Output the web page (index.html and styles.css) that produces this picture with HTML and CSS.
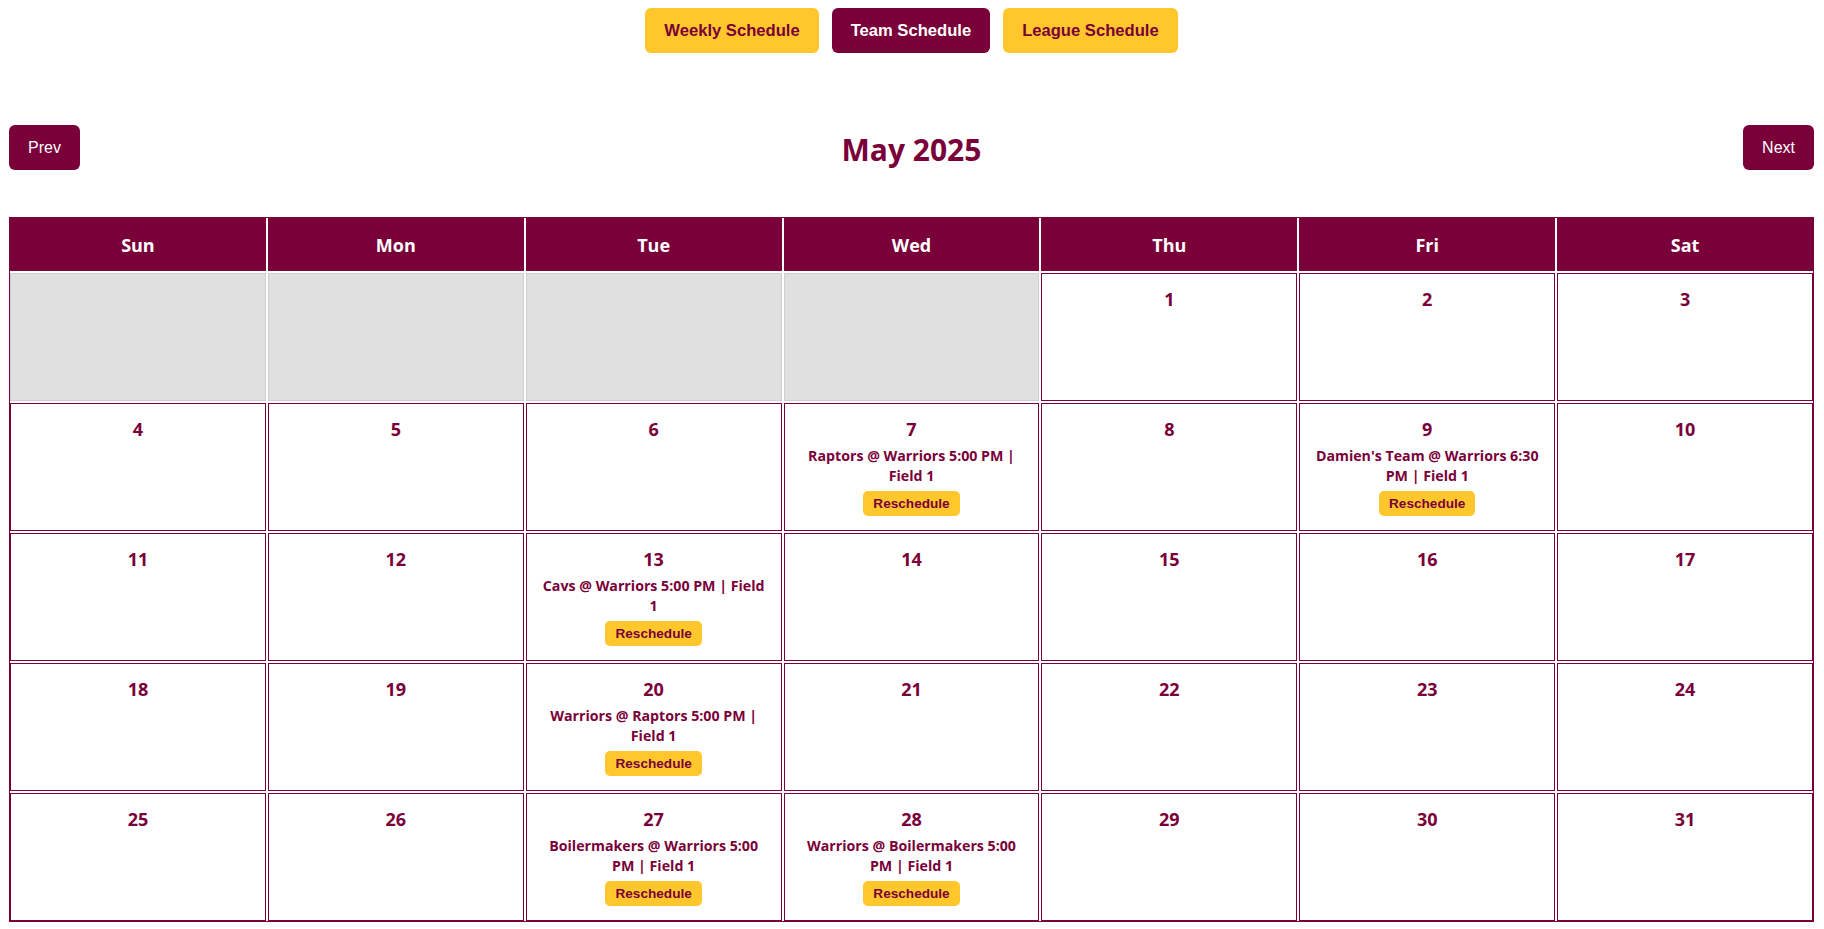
FILE: index.html
```html
<!DOCTYPE html>
<html lang="en">
<head>
<meta charset="utf-8">
<title>Team Schedule</title>
<link rel="stylesheet" href="styles.css">
</head>
<body>
<nav class="tabs">
  <button class="tab">Weekly Schedule</button>
  <button class="tab active">Team Schedule</button>
  <button class="tab">League Schedule</button>
</nav>

<div class="month-bar">
  <button class="nav-btn">Prev</button>
  <h2 class="month-title">May 2025</h2>
  <button class="nav-btn">Next</button>
</div>

<div class="calendar">
  <div class="dow">Sun</div>
  <div class="dow">Mon</div>
  <div class="dow">Tue</div>
  <div class="dow">Wed</div>
  <div class="dow">Thu</div>
  <div class="dow">Fri</div>
  <div class="dow">Sat</div>

  <div class="day empty"></div>
  <div class="day empty"></div>
  <div class="day empty"></div>
  <div class="day empty"></div>
  <div class="day"><div class="num">1</div></div>
  <div class="day"><div class="num">2</div></div>
  <div class="day"><div class="num">3</div></div>

  <div class="day"><div class="num">4</div></div>
  <div class="day"><div class="num">5</div></div>
  <div class="day"><div class="num">6</div></div>
  <div class="day"><div class="num">7</div><div class="event">Raptors @ Warriors 5:00 PM | Field 1</div><button class="resched">Reschedule</button></div>
  <div class="day"><div class="num">8</div></div>
  <div class="day"><div class="num">9</div><div class="event">Damien's Team @ Warriors 6:30 PM | Field 1</div><button class="resched">Reschedule</button></div>
  <div class="day"><div class="num">10</div></div>

  <div class="day"><div class="num">11</div></div>
  <div class="day"><div class="num">12</div></div>
  <div class="day"><div class="num">13</div><div class="event">Cavs @ Warriors 5:00 PM | Field 1</div><button class="resched">Reschedule</button></div>
  <div class="day"><div class="num">14</div></div>
  <div class="day"><div class="num">15</div></div>
  <div class="day"><div class="num">16</div></div>
  <div class="day"><div class="num">17</div></div>

  <div class="day"><div class="num">18</div></div>
  <div class="day"><div class="num">19</div></div>
  <div class="day"><div class="num">20</div><div class="event">Warriors @ Raptors 5:00 PM | Field 1</div><button class="resched">Reschedule</button></div>
  <div class="day"><div class="num">21</div></div>
  <div class="day"><div class="num">22</div></div>
  <div class="day"><div class="num">23</div></div>
  <div class="day"><div class="num">24</div></div>

  <div class="day"><div class="num">25</div></div>
  <div class="day"><div class="num">26</div></div>
  <div class="day"><div class="num">27</div><div class="event">Boilermakers @ Warriors 5:00 PM | Field 1</div><button class="resched">Reschedule</button></div>
  <div class="day"><div class="num">28</div><div class="event">Warriors @ Boilermakers 5:00 PM | Field 1</div><button class="resched">Reschedule</button></div>
  <div class="day"><div class="num">29</div></div>
  <div class="day"><div class="num">30</div></div>
  <div class="day"><div class="num">31</div></div>
</div>
</body>
</html>
```

FILE: styles.css
```css
* { box-sizing: border-box; }

body {
  margin: 0;
  padding: 8px 10px 0 9px;
  background: #ffffff;
  font-family: "Open Sans", "Noto Sans", sans-serif;
  color: #7a0039;
}

button {
  font-family: "Liberation Sans", Arial, sans-serif;
  border: none;
  cursor: pointer;
}

.tabs {
  display: flex;
  justify-content: center;
  gap: 13px;
}

.tab {
  height: 45px;
  padding: 0 19px;
  border-radius: 6px;
  background: #ffc72c;
  color: #7a0039;
  font-size: 16.6px;
  font-weight: 700;
}

.tab.active {
  background: #7a0039;
  color: #ffffff;
}

.month-bar {
  display: flex;
  justify-content: space-between;
  align-items: center;
  margin-top: 72px;
}

.nav-btn {
  height: 45px;
  padding: 0 19px;
  border-radius: 6px;
  background: #7a0039;
  color: #ffffff;
  font-size: 16px;
}

.month-title {
  margin: 0;
  padding-top: 3px;
  font-size: 30px;
  font-weight: 700;
  color: #7a0039;
}

.calendar {
  display: grid;
  grid-template-columns: repeat(7, 1fr);
  gap: 2px;
  margin-top: 47px;
  border: 1px solid #7a0039;
}

.dow {
  height: 53px;
  display: flex;
  align-items: center;
  justify-content: center;
  background: #7a0039;
  color: #ffffff;
  font-size: 18px;
  font-weight: 700;
}

.day {
  height: 128px;
  border: 1px solid #7a0039;
  padding: 13px 12px 0;
  text-align: center;
  display: flex;
  flex-direction: column;
  align-items: center;
}

.day.empty {
  background: #e0e0e0;
  border-color: #cfcfcf;
}

.num {
  font-size: 18px;
  font-weight: 700;
  line-height: 24px;
}

.event {
  margin-top: 5px;
  font-size: 14.2px;
  font-weight: 700;
  line-height: 20px;
}

.resched {
  margin-top: 5px;
  padding: 0 10px;
  height: 25px;
  border-radius: 5px;
  background: #ffc72c;
  color: #7a0039;
  font-size: 13.6px;
  font-weight: 700;
}
```
